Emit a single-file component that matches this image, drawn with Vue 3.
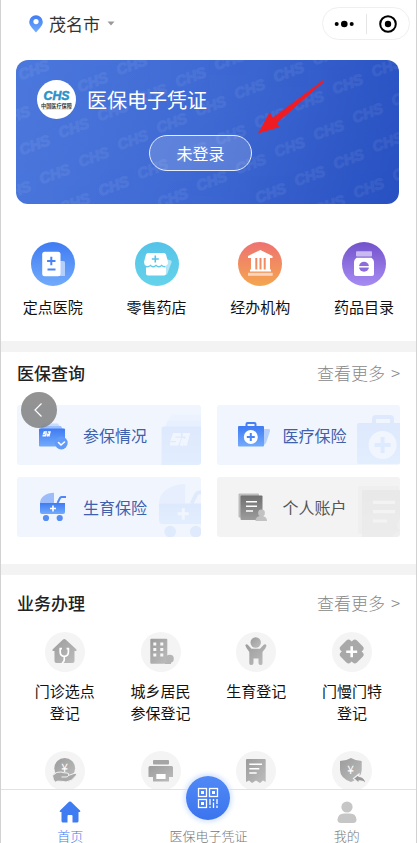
<script setup>
const marks = []
for (let row = -5; row <= 5; row++) {
  for (let col = -12; col <= 12; col++) {
    const x = 313 + col * 39 + row * 20
    const y = 71 - col * 17 + row * 29
    if (x > -12 && x < 395 && y > -6 && y < 150) marks.push({ x, y })
  }
}

const queries = [
  { label: '参保情况', icon: 'q-wallet', mark: 'large' },
  { label: '医疗保险', icon: 'q-bag' },
  { label: '生育保险', icon: 'q-stroller', mark: 'small' },
  { label: '个人账户', icon: 'q-account', muted: true },
]

const services = [
  { lines: ['门诊选点', '登记'], icon: 's-clinic' },
  { lines: ['城乡居民', '参保登记'], icon: 's-building' },
  { lines: ['生育登记'], icon: 's-child' },
  { lines: ['门慢门特', '登记'], icon: 's-cross' },
  { lines: [], icon: 's-coin' },
  { lines: [], icon: 's-printer' },
  { lines: [], icon: 's-receipt' },
  { lines: [], icon: 's-shield' },
]
</script>

<template>
  <div class="page">
    <svg class="sprite" width="0" height="0" aria-hidden="true">
      <defs>
        <linearGradient id="g-blue" x1="0" y1="0" x2="0" y2="1">
          <stop offset="0" stop-color="#3f7bf3" /><stop offset="1" stop-color="#72abfb" />
        </linearGradient>
        <linearGradient id="g-gray" x1="0" y1="0" x2="1" y2="1">
          <stop offset="0" stop-color="#9c9c9c" /><stop offset="1" stop-color="#bdbdbd" />
        </linearGradient>
        <linearGradient id="g-dark" x1="0" y1="0" x2="0" y2="1">
          <stop offset="0" stop-color="#6f6f6f" /><stop offset="1" stop-color="#9d9d9d" />
        </linearGradient>
      </defs>

      <symbol id="q-wallet" viewBox="0 -3 34 30">
        <path d="M5 0.5H20L21.5 3H4Z" fill="#c9dcfd" />
        <path d="M3.5 3H23L24.5 6H2.5Z" fill="#9dc0fb" />
        <rect x="1" y="5.500" width="26" height="18" rx="1" fill="url(#g-blue)" />
        <path d="M9 9H6.300L5.600 10.900H8.200L7.400 12.800H4.500M9.200 13.500L10.200 10.500M9.800 9H12L10.800 13.500" fill="none" stroke="#fff" stroke-width="1.400" />
        <circle cx="23.300" cy="20" r="6.400" fill="#629af8" />
        <path d="M20.500 19.500L23 22L26.500 19" fill="none" stroke="#fff" stroke-width="1.600" stroke-linecap="round" />
      </symbol>

      <symbol id="q-bag" viewBox="1 0 34 30">
        <path d="M27 9H31.500Q33.500 9 33 11L29 23Q28 25 26 25Z" fill="#b5d0fc" />
        <path d="M9.500 7V4Q9.500 3 10.500 3H17.500Q18.500 3 18.500 4V7" fill="none" stroke="#477ff4" stroke-width="2" />
        <rect x="1" y="6" width="26" height="20.500" rx="1" fill="url(#g-blue)" />
        <circle cx="13.800" cy="17" r="7" fill="#fff" />
        <path d="M13.800 13V21M9.800 17H17.800" stroke="#4a86f6" stroke-width="2" />
      </symbol>

      <symbol id="q-stroller" viewBox="-1 0 34 30">
        <path d="M1 11C1 5 7 .7 15 .7V11Z" fill="#9cbdf9" />
        <path d="M18.500 11L21 6Q21.500 5 22.500 5H27" fill="none" stroke="#4d88f6" stroke-width="2" />
        <path d="M1 11H26V20Q26 22 24 22H3Q1 22 1 20Z" fill="url(#g-blue)" />
        <path d="M14 13.500V19.500M11 16.500H17" stroke="#fff" stroke-width="1.600" />
        <circle cx="7" cy="26" r="3.100" fill="#568df5" /><circle cx="20.700" cy="26" r="3.100" fill="#568df5" />
      </symbol>

      <symbol id="q-account" viewBox="1 0 34 30">
        <rect x="1.500" y="1.500" width="20.500" height="24" rx="1" fill="#bdbdbd" />
        <rect x="3.500" y="3.500" width="22" height="24.500" rx="1" fill="url(#g-dark)" />
        <path d="M9 9.700H20M9 14.300H20M9 19H16" stroke="#fff" stroke-width="1.600" />
        <circle cx="24.500" cy="21" r="3.400" fill="#c2c2c2" />
        <path d="M18.500 29Q18.500 24 24 24Q30 24 30 29Z" fill="#c2c2c2" />
      </symbol>

      <symbol id="s-clinic" viewBox="0 0 40 40">
        <path d="M18 7.500Q19.300 6.300 20.600 7.500L31 17Q32.500 18.800 30.500 19H29.500V29Q29.500 31 27.500 31H11.500Q9.500 31 9.500 29V19H8.500Q6.500 18.800 8 17Z" fill="url(#g-gray)" />
        <path d="M17 16.700H15.200V20Q15.200 24.300 19.300 24.300Q23.400 24.300 23.400 20V16.700H21.600M19.300 24.500V27.500Q19.300 30 17 31" fill="none" stroke="#fff" stroke-width="1.700" />
      </symbol>
      <symbol id="s-building" viewBox="0 0 40 40">
        <rect x="9.300" y="6.700" width="17" height="25" rx="1" fill="url(#g-gray)" />
        <path d="M12.300 10.500h3v3h-3zM19.300 10.500h3v3h-3zM12.300 16h3v3h-3zM19.300 16h3v3h-3zM12.300 21.500h3v3h-3zM19.300 21.500h3v3h-3z" fill="#f8f8f8" />
        <circle cx="28.800" cy="26.800" r="4" fill="#b5b5b5" /><path d="M24 31H30" stroke="#b5b5b5" stroke-width="2" />
      </symbol>
      <symbol id="s-child" viewBox="0 0 40 40">
        <circle cx="19.700" cy="10.500" r="5.200" fill="url(#g-gray)" />
        <path d="M9.300 13.200Q10.500 11.300 12 13L15.500 16.800H24L27.500 13Q29.500 11.500 30.500 13.500Q30 16 26.500 20V31.500Q26.500 33 24.500 33Q22.500 33 22.500 31V26.500H17.500V31Q17.500 33 15.500 33Q13.300 33 13.300 31.500V20Q10 16 9.300 13.200Z" fill="url(#g-gray)" />
      </symbol>
      <symbol id="s-cross" viewBox="0 0 40 40">
        <g fill="#a9a9a9">
          <rect x="8.200" y="12.500" width="23" height="14" rx="3" transform="rotate(45 19.700 19.500)" />
          <rect x="8.200" y="12.500" width="23" height="14" rx="3" transform="rotate(-45 19.700 19.500)" />
        </g>
        <path d="M19.700 14.300V25.300M14.200 19.800H25.200" stroke="#fff" stroke-width="2.600" />
      </symbol>
      <symbol id="s-coin" viewBox="0 0 40 40">
        <circle cx="19.700" cy="17.300" r="10.400" fill="url(#g-gray)" />
        <text class="yen" x="19.700" y="21" text-anchor="middle">¥</text>
        <path d="M7.500 24.500Q12 20 16 21Q19 22 22 22Q24.500 22.300 23.500 24.500L29 22.500Q32.500 22 31 24.500Q27 30.500 21 31Q16 30 12.500 30.200L10 31.300Q8 29 7.500 24.500Z" fill="#a9a9a9" stroke="#f4f4f4" stroke-width="1" />
        <path d="M16.500 26H21Q23 26 23.500 24.500" fill="none" stroke="#f4f4f4" stroke-width="1" />
      </symbol>
      <symbol id="s-printer" viewBox="0 0 40 40">
        <rect x="12" y="9" width="16" height="4.500" rx="1" fill="#a5a5a5" />
        <path d="M9 15H30.500Q32 15 32 16.500V26H28V30.500H12V26H7.500V16.500Q7.500 15 9 15Z" fill="url(#g-gray)" />
        <rect x="15.300" y="23" width="9.300" height="5" fill="#fff" />
      </symbol>
      <symbol id="s-receipt" viewBox="0 0 40 40">
        <path d="M11 8H28.700Q29.700 8 29.700 9V31L27 29.500L24 32L20 29.500L16 32L13 29.500L10 31V9Q10 8 11 8Z" fill="url(#g-gray)" />
        <path d="M13.300 13.300H26M13.300 17.700H23.300M13.300 22H20.700" stroke="#fff" stroke-width="1.600" />
      </symbol>
      <symbol id="s-shield" viewBox="0 0 40 40">
        <path d="M19 7Q24 10 29.700 10V19Q29.700 27 19 31Q8 27 8 19V10Q14 10 19 7Z" fill="url(#g-gray)" />
        <text class="yen" x="18.700" y="22.500" text-anchor="middle">¥</text>
        <path d="M21.500 27.500L27 23V25.500Q33.500 26 34 33Q31 29.500 27 30V32.500Z" fill="#999" stroke="#f4f4f4" stroke-width="1.200" />
      </symbol>
    </svg>

    <main class="content">
      <header class="topbar">
        <button class="city" type="button">
          <svg class="pin" viewBox="0 0 14 18" aria-hidden="true">
            <path d="M7 17.500C5 14.500.2 11 .2 6.900A6.800 6.700 0 0 1 13.800 6.900C13.800 11 9 14.500 7 17.500Z" fill="url(#g-blue)" />
            <circle cx="7" cy="6.600" r="2.600" fill="#fff" />
          </svg>
          <span>茂名市</span>
          <svg class="caret" viewBox="0 0 8 5" aria-hidden="true"><path d="M.5 .5H7.500L4 4.500Z" fill="#999" /></svg>
        </button>
        <div class="capsule">
          <button type="button" aria-label="更多">
            <svg viewBox="0 0 20 20" aria-hidden="true"><circle cx="2.700" cy="10" r="2" /><circle cx="10.300" cy="10" r="3.300" /><circle cx="17.700" cy="10" r="2" /></svg>
          </button>
          <button type="button" aria-label="关闭">
            <svg viewBox="0 0 20 20" aria-hidden="true"><circle cx="10" cy="10" r="7.800" fill="none" stroke="#000" stroke-width="2" /><circle cx="10" cy="10" r="3.200" /></svg>
          </button>
        </div>
      </header>

      <section class="card">
        <svg class="pattern" viewBox="0 0 383 144" preserveAspectRatio="xMidYMid slice" aria-hidden="true">
          <text v-for="(m, i) in marks" :key="i" :x="m.x" :y="m.y" :transform="`rotate(-20 ${m.x} ${m.y})`" text-anchor="middle" dominant-baseline="middle">CHS</text>
        </svg>
        <div class="card-head">
          <svg class="logo" viewBox="0 0 38 38" role="img" aria-label="中国医疗保障">
            <circle cx="19" cy="19" r="19" fill="#fff" />
            <text class="logo-en" x="19" y="19.500" text-anchor="middle">CHS</text>
            <text class="logo-cn" x="19" y="27" text-anchor="middle">中国医疗保障</text>
            <path d="M5 28.500H33" stroke="#e0cdbd" stroke-width=".6" />
          </svg>
          <h1>医保电子凭证</h1>
        </div>
        <button class="login" type="button">未登录</button>
        <svg class="arrow" viewBox="0 0 68 54" aria-hidden="true">
          <path d="M66 .3Q67.500 .8 66 2.500L20 43L22.500 47L1 53.500L12.500 32.500L16 37.500Z" fill="#f01c24" />
        </svg>
      </section>

      <nav class="quick">
        <a href="#">
          <svg viewBox="0 0 44 44" aria-hidden="true">
            <circle cx="22" cy="22" r="22" fill="url(#g-blue)" />
            <path d="M28 19H32.500Q34 19 34 20.500V34H28Z" fill="#b5cffc" />
            <rect x="11.200" y="9.700" width="18.300" height="24.500" rx="2.500" fill="#fff" />
            <path d="M20.300 14.800V23.200M16.100 19H24.500M16.500 27.400H24.500" stroke="#4a84f4" stroke-width="2" />
          </svg>
          <span>定点医院</span>
        </a>
        <a href="#">
          <svg viewBox="0 0 44 44" aria-hidden="true">
            <defs><linearGradient id="g-cyan" x1="0" y1="0" x2="0" y2="1"><stop offset="0" stop-color="#55c3e8" /><stop offset="1" stop-color="#65d3ea" /></linearGradient></defs>
            <circle cx="22" cy="22" r="22" fill="url(#g-cyan)" />
            <path d="M31 17L36 18.500Q37 19 36.500 20.500L32 32.500H29Z" fill="#b3e6f4" />
            <path d="M13 11H29Q30.500 11 31 12.500L33 20Q33 23.500 30 24Q28 24 26.500 22.500Q24 25.500 21 22.500Q18 25.500 15.500 22.500Q14 24.500 11.500 24Q9 23 9 20L11 12.500Q11.500 11 13 11Z" fill="#fff" />
            <path d="M11 25.500Q14 25.500 15.500 24.300Q18 26.800 21 24.300Q24 26.800 26.500 24.300Q28 25.500 31 25.500V31.500Q31 33.500 29 33.500H13Q11 33.500 11 31.500Z" fill="#fff" />
            <path d="M20.300 13.500V20.500M16.800 17H23.800" stroke="#55c3e8" stroke-width="1.600" />
          </svg>
          <span>零售药店</span>
        </a>
        <a href="#">
          <svg viewBox="0 0 44 44" aria-hidden="true">
            <defs><linearGradient id="g-orange" x1="0" y1="0" x2="0" y2="1"><stop offset="0" stop-color="#ee7272" /><stop offset="1" stop-color="#f4a64f" /></linearGradient></defs>
            <circle cx="22" cy="22" r="22" fill="url(#g-orange)" />
            <path d="M22.300 8L34.500 14V16H10V14ZM13 16H17.300V28H13ZM19.300 16H21.500V28H19.300ZM23.500 16H25.700V28H23.500ZM27.700 16H32V28H27.700ZM12 27.500H33V29.500H12Z" fill="#fff" />
            <rect x="10" y="30.800" width="24.700" height="3" fill="#fbd5c3" />
          </svg>
          <span>经办机构</span>
        </a>
        <a href="#">
          <svg viewBox="0 0 44 44" aria-hidden="true">
            <defs><linearGradient id="g-purple" x1="0" y1="0" x2="0" y2="1"><stop offset="0" stop-color="#7353cb" /><stop offset="1" stop-color="#a78bf3" /></linearGradient></defs>
            <circle cx="22" cy="22" r="22" fill="url(#g-purple)" />
            <rect x="14" y="9.300" width="16" height="5.200" rx="1" fill="#c9b9f0" />
            <path d="M14.500 15.700H29.500Q32 17.500 32 20V32Q32 34 30 34H14Q12 34 12 32V20Q12 17.500 14.500 15.700Z" fill="#fff" />
            <circle cx="22" cy="24.800" r="5" fill="#8c6cdd" /><path d="M17 24.800H27" stroke="#fff" stroke-width="1.500" />
          </svg>
          <span>药品目录</span>
        </a>
      </nav>

      <section class="block query">
        <div class="block-head">
          <h2>医保查询</h2>
          <a href="#"><span>查看更多</span><span>&gt;</span></a>
        </div>
        <div class="tiles">
          <a v-for="q in queries" :key="q.label" href="#" class="tile" :class="{ muted: q.muted }">
            <svg class="tile-icon" aria-hidden="true"><use :href="'#' + q.icon" /></svg>
            <span>{{ q.label }}</span>
            <svg class="tile-mark" :class="q.mark" aria-hidden="true"><use :href="'#' + q.icon" /></svg>
          </a>
        </div>
        <button class="back" type="button" aria-label="返回">
          <svg viewBox="0 0 16 16" aria-hidden="true"><path d="M10.500 1.500L4 8L10.500 14.500" fill="none" stroke="#fff" stroke-width="1.200" /></svg>
        </button>
      </section>

      <section class="block service">
        <div class="block-head">
          <h2>业务办理</h2>
          <a href="#"><span>查看更多</span><span>&gt;</span></a>
        </div>
        <div class="services">
          <a v-for="s in services" :key="s.icon" href="#">
            <svg aria-hidden="true"><use :href="'#' + s.icon" /></svg>
            <span v-for="line in s.lines" :key="line">{{ line }}</span>
          </a>
        </div>
      </section>
    </main>

    <nav class="tabbar">
      <a href="#" class="active">
        <svg viewBox="0 0 22 22" aria-hidden="true"><path d="M10 .8Q11 0 12 .8L21 9.500Q22 11 20.500 11H19.500V20Q19.500 21.500 18 21.500H13.500V15Q13.500 14 12.500 14H9.500Q8.500 14 8.500 15V21.500H4Q2.500 21.500 2.500 20V11H1.500Q0 11 1 9.500Z" fill="#3f7cf2" /></svg>
        <span>首页</span>
      </a>
      <a href="#" class="center">
        <i class="scan">
          <svg viewBox="0 0 22 22" aria-hidden="true">
            <g fill="none" stroke="#fff" stroke-width="1.300">
              <rect x="1.500" y="1.500" width="8" height="8" /><rect x="12.500" y="1.500" width="8" height="8" /><rect x="1.500" y="12.500" width="8" height="8" />
              <path d="M13 12V18M13 19.500V21M16.500 12V14M16.500 15.500V21M20 12V17M20 18.500V21" />
            </g>
            <path d="M4 4h3v3H4zM15 4h3v3h-3zM4 15h3v3H4z" fill="#fff" />
          </svg>
        </i>
        <span>医保电子凭证</span>
      </a>
      <a href="#">
        <svg viewBox="0 0 22 22" aria-hidden="true"><circle cx="11" cy="6" r="5.600" fill="#c6c6c6" /><path d="M1.500 18.500Q2 12.500 8 12.500H14Q20 12.500 20.500 18.500Q20.500 22 17 22H5Q1.500 22 1.500 18.500Z" fill="#c6c6c6" /></svg>
        <span>我的</span>
      </a>
    </nav>
  </div>
</template>

<style>
body {
  margin: 0;
  overflow: hidden;
}
</style>

<style scoped>
.page {
  box-sizing: border-box;
  display: flex;
  flex-direction: column;
  height: 100vh;
  border: 0 solid #d2d2d2;
  border-width: 0 1px;
  background: #fff;
  color: #111;
  font-family: "Noto Sans CJK SC", "Noto Sans", sans-serif;
}
.sprite {
  position: absolute;
}
a {
  color: inherit;
  text-decoration: none;
}
button {
  padding: 0;
  border: 0;
  background: none;
  color: inherit;
  font: inherit;
}
h1,
h2 {
  margin: 0;
}
.content {
  flex: 1;
  min-height: 0;
  overflow-y: auto;
  scrollbar-width: none;
}
.topbar {
  display: flex;
  align-items: center;
  justify-content: space-between;
  height: 47px;
  padding: 0 6px 0 28px;
}
.city {
  display: flex;
  align-items: center;
  font-size: 17px;
  line-height: 24px;
  color: #333;
}
.pin {
  width: 14px;
  height: 18px;
  margin-right: 6px;
}
.caret {
  width: 8px;
  height: 5px;
  margin-left: 7px;
}
.capsule {
  box-sizing: border-box;
  display: flex;
  align-items: center;
  width: 88px;
  height: 33px;
  border: 1px solid #efefef;
  border-radius: 17px;
}
.capsule button {
  flex: 1;
  display: flex;
  justify-content: center;
}
.capsule button + button {
  border-left: 1px solid #e6e6e6;
}
.capsule svg {
  width: 20px;
  height: 20px;
}
.card {
  position: relative;
  display: flex;
  flex-direction: column;
  align-items: center;
  box-sizing: border-box;
  min-height: 144px;
  margin: 13px 17px 0 15px;
  padding: 20px 21px 0;
  border-radius: 12px;
  background: linear-gradient(105deg, #4c78dd, #3e69d3 50%, #2850c1);
  color: #fff;
}
.pattern {
  position: absolute;
  inset: 0;
  width: 100%;
  height: 100%;
  border-radius: 12px;
}
.pattern text {
  fill: #fff;
  stroke: #fff;
  stroke-width: 1px;
  opacity: 0.06;
  font: italic bold 15px "Liberation Sans", sans-serif;
}
.card-head {
  position: relative;
  display: flex;
  align-items: center;
  align-self: stretch;
  gap: 11px;
}
.logo {
  width: 39px;
  height: 39px;
}
.logo-en {
  fill: #2b91c8;
  stroke: #2b91c8;
  stroke-width: 0.5px;
  font: italic bold 12px "Liberation Sans", sans-serif;
}
.logo-cn {
  fill: #333;
  font-size: 5px;
  font-weight: bold;
}
.card h1 {
  font-size: 20px;
  line-height: 28px;
  font-weight: 400;
}
.login {
  position: relative;
  box-sizing: border-box;
  width: 103px;
  height: 36px;
  margin: 16px 0 0 -14px;
  border: 1px solid #e7edfb;
  border-radius: 18px;
  background: rgba(255, 255, 255, 0.16);
  font-size: 16px;
}
.arrow {
  position: absolute;
  top: 20px;
  left: 63%;
  width: 68px;
  height: 54px;
}
.quick {
  display: grid;
  grid-template-columns: repeat(4, 1fr);
  padding: 38px 0 23px;
}
.quick a {
  display: flex;
  flex-direction: column;
  align-items: center;
  gap: 10px;
  font-size: 15px;
  line-height: 22px;
}
.quick svg {
  width: 44px;
  height: 44px;
}
.block {
  position: relative;
  border-top: 11px solid #f3f3f3;
}
.query {
  padding: 9px 16px 27px;
}
.service {
  padding: 16px 16px 0;
}
.block-head {
  display: flex;
  justify-content: space-between;
  font-size: 17px;
  line-height: 24px;
}
.block-head h2 {
  font-size: 17px;
  font-weight: 500;
  color: #222;
}
.block-head a {
  display: flex;
  gap: 6px;
  color: #888;
  font-weight: 300;
}
.tiles {
  display: grid;
  grid-template-columns: 1fr 1fr;
  gap: 12px 16px;
  margin-top: 20px;
}
.tile {
  position: relative;
  display: flex;
  align-items: center;
  gap: 11px;
  height: 60px;
  padding-left: 21px;
  overflow: hidden;
  border-radius: 3px;
  background: #f0f5fe;
  color: #3e60ad;
  font-size: 16px;
}
.tile.muted {
  background: #f3f3f3;
  color: #555;
}
.tile-icon {
  width: 34px;
  height: 30px;
}
.tile-mark {
  position: absolute;
  top: 6px;
  right: -25px;
  width: 68px;
  height: 60px;
  opacity: 0.1;
}
.tile-mark.large {
  top: 1px;
  right: -40px;
  width: 82px;
  height: 72px;
}
.tile-mark.small {
  right: -18px;
  width: 64px;
  height: 56px;
}
.muted .tile-mark {
  opacity: 0.07;
}
.back {
  position: absolute;
  top: 40px;
  left: 20px;
  display: flex;
  align-items: center;
  justify-content: center;
  width: 36px;
  height: 36px;
  border-radius: 50%;
  background: rgba(128, 128, 128, 0.85);
}
.back svg {
  width: 16px;
  height: 16px;
}
.services {
  display: grid;
  grid-template-columns: repeat(4, 1fr);
  row-gap: 27px;
  margin-top: 17px;
}
.services a {
  display: flex;
  flex-direction: column;
  align-items: center;
  font-size: 15px;
  line-height: 22px;
}
.services svg {
  width: 40px;
  height: 40px;
  margin-bottom: 8px;
  border-radius: 50%;
  background: #f4f4f4;
}
.yen {
  fill: #fff;
  font: 12px "Noto Sans CJK SC", sans-serif;
}
.tabbar {
  position: relative;
  box-sizing: border-box;
  display: grid;
  grid-template-columns: repeat(3, 1fr);
  height: 54px;
  padding-top: 11px;
  border-top: 1px solid #e2e2e2;
  background: #fff;
  color: #777;
  font-size: 13px;
  line-height: 14px;
  font-weight: 300;
}
.tabbar a {
  position: relative;
  display: flex;
  flex-direction: column;
  align-items: center;
  justify-content: space-between;
}
.tabbar svg {
  width: 22px;
  height: 22px;
}
.tabbar .active {
  color: #3f7cf2;
}
.tabbar .center {
  justify-content: flex-end;
}
.scan {
  position: absolute;
  bottom: 23px;
  display: flex;
  align-items: center;
  justify-content: center;
  width: 44px;
  height: 44px;
  border-radius: 50%;
  background: linear-gradient(#5089f6, #3c74ee);
  box-shadow: 0 0 5px 2px #d3e3fd;
}
</style>
